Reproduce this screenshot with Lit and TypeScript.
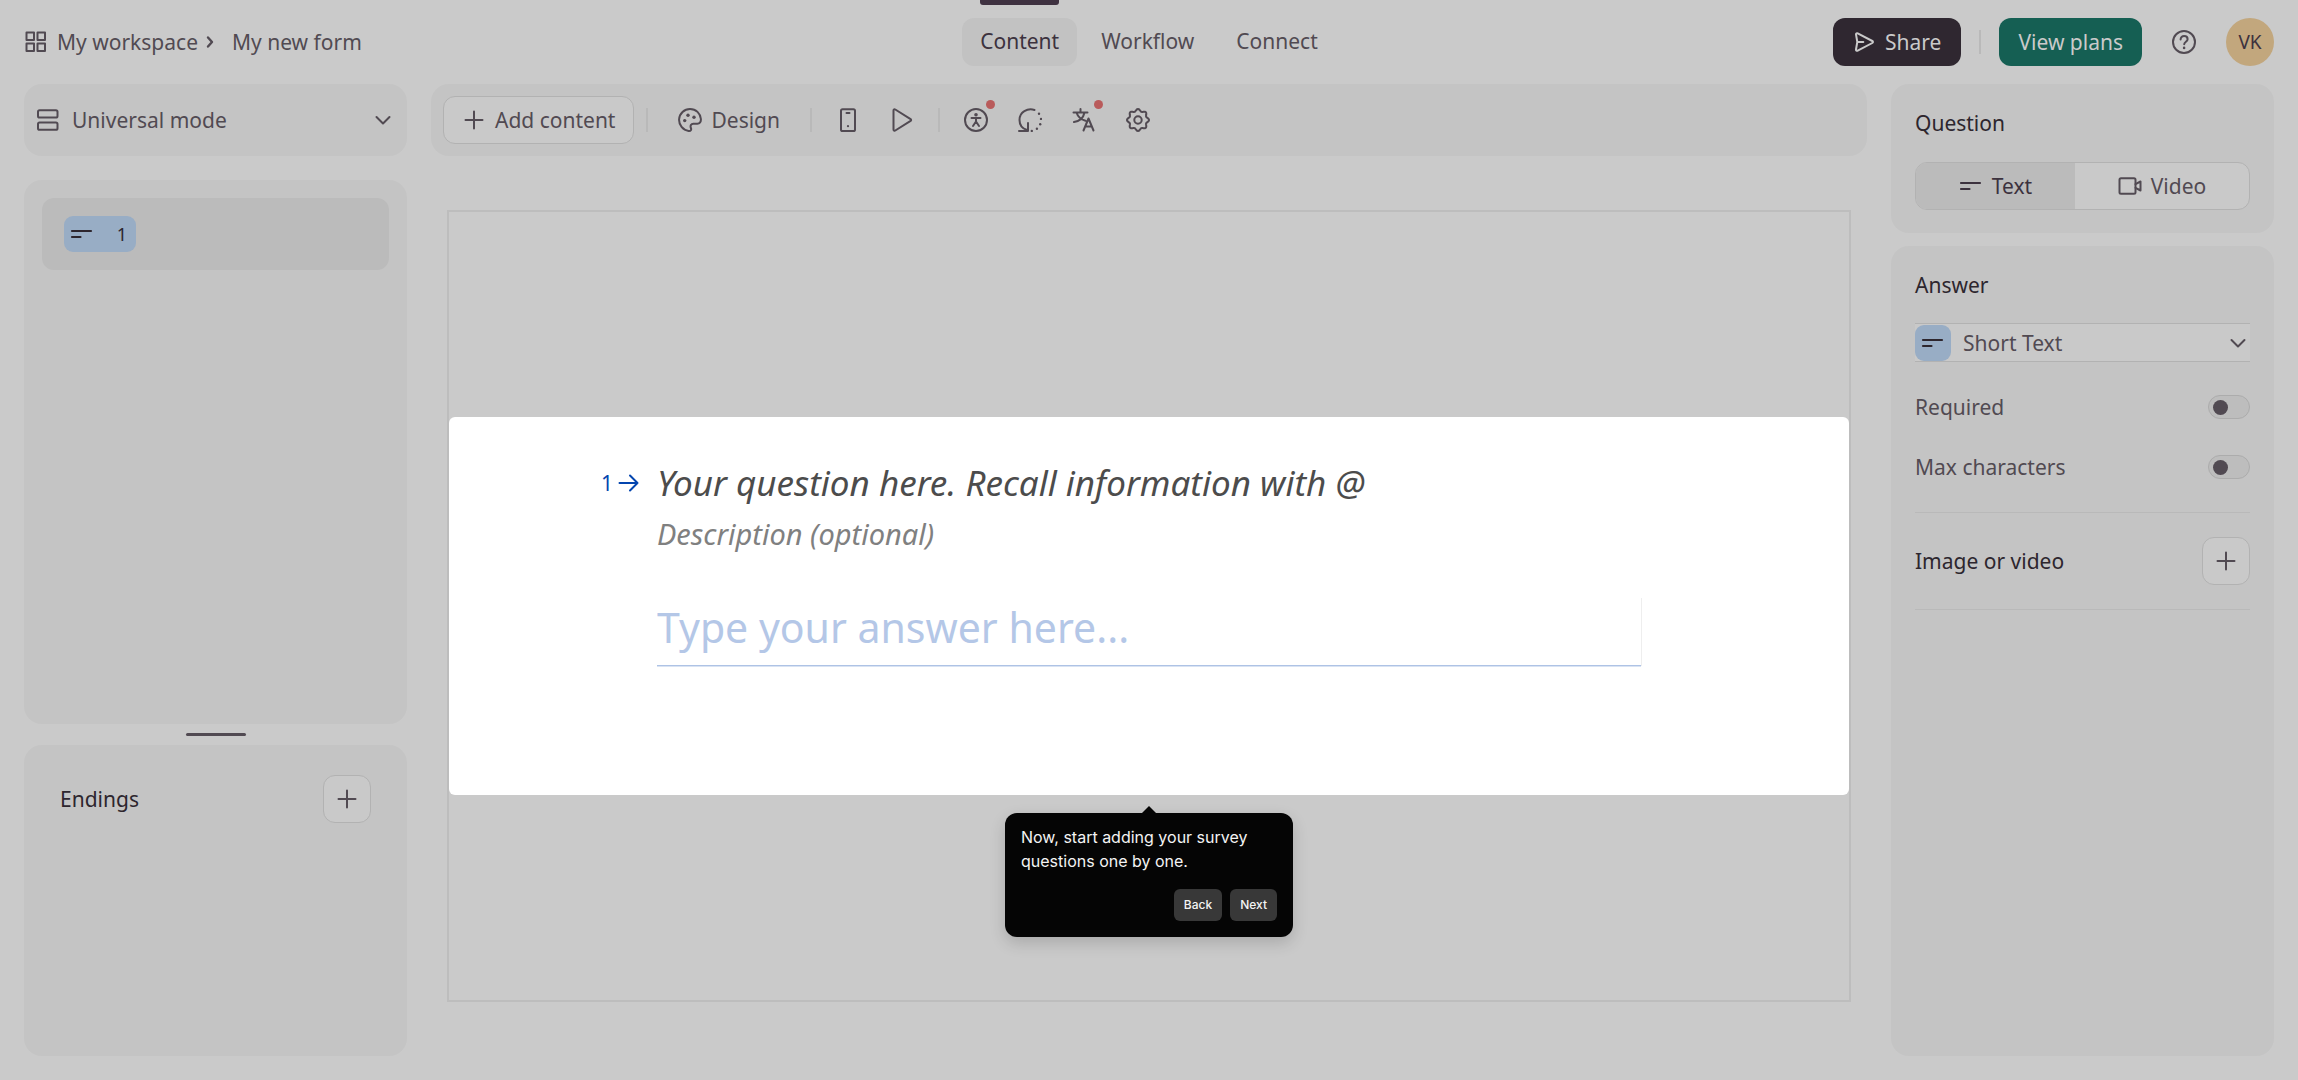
import { LitElement, html, svg, css } from "lit";
import { customElement, state } from "lit/decorators.js";

/** Outline of the settings cog: a circle whose radius swells into eight lobes. */
const cogOutline = (() => {
  const points: string[] = [];
  for (let i = 0; i < 96; i++) {
    const angle = (i / 96) * Math.PI * 2;
    const r = 9.9 + 1.1 * Math.cos(8 * angle);
    points.push(`${(12 + r * Math.cos(angle)).toFixed(2)} ${(12 + r * Math.sin(angle)).toFixed(2)}`);
  }
  return `M${points.join("L")}Z`;
})();

const glyphs = {
  grid: svg`<path d="M2.5 2.5h7.5v7.5h-7.5zM13.5 2.5h7.5v7.5h-7.5zM2.5 13.5h7.5v7.5h-7.5zM13.5 13.5h7.5v7.5h-7.5z" />`,
  crumb: svg`<path d="M10 7.500l4 4.500-4 4.500" stroke-width="2.400" />`,
  rows: svg`<rect x="2" y="2.200" width="19.500" height="7.400" rx="1.600" /><rect x="2" y="14.400" width="19.500" height="7.400" rx="1.600" />`,
  down: svg`<path d="M5.500 9l6.500 6.500L18.500 9" />`,
  plus: svg`<path d="M12 3.500v17M3.500 12h17" />`,
  lines: svg`<path d="M2 9h19M2 15h8.500" stroke-width="2.200" />`,
  send: svg`<path d="M3 4.400c0-1 .9-1.500 1.700-1.100l14.600 7.700c.9.500.9 1.500 0 2l-14.600 7.700c-.9.400-1.800-.3-1.700-1.200L4.300 12zM4.500 12h5.800" />`,
  help: svg`<circle cx="12" cy="12" r="11" /><path d="M8.600 9.400c0-2 1.500-3.400 3.500-3.400s3.500 1.300 3.500 3.200c0 2.500-3.400 2.600-3.400 5.100" /><circle class="solid" cx="12.100" cy="17.900" r="1.300" />`,
  palette: svg`<path d="M22.900 11C22.400 5.300 18 1 12 1a11 11 0 0 0-1.400 21.900c2.300.3 3-1.200 2.300-2.900-.9-2.200.1-4.200 2.400-4.200h4c2.500 0 3.800-2 3.600-4.800z" /><circle class="solid" cx="6.700" cy="12.600" r="1.700" /><circle class="solid" cx="10" cy="7.200" r="1.700" /><circle class="solid" cx="16" cy="9.200" r="1.700" />`,
  phone: svg`<rect x="5" y="1.200" width="14" height="21.800" rx="1.600" /><path d="M10.500 5h3" /><circle class="solid" cx="12" cy="18.200" r="1.100" />`,
  play: svg`<path d="M3.500 2.400c0-1 1-1.500 1.800-.9l15.300 9.600c.7.500.7 1.300 0 1.800l-15.300 9.600c-.8.600-1.800 0-1.800-1z" />`,
  access: svg`<circle cx="12" cy="12" r="11" /><circle class="solid" cx="12" cy="6.700" r="1.800" /><path d="M7.500 10h9M12 10v4M12 13.500l-3 4.500M12 13.500l3 4.500" />`,
  recall: svg`<path d="M16.500 2C9.500-.2 1.500 4 1.500 12c0 4.500 2.700 8.500 7.500 10M1 23h9v-8" /><circle class="solid" cx="21" cy="5.800" r="1.200" /><circle class="solid" cx="23" cy="10.900" r="1.200" /><circle class="solid" cx="22.200" cy="16.200" r="1.200" /><circle class="solid" cx="18.900" cy="20.700" r="1.200" /><circle class="solid" cx="13.800" cy="23" r="1.200" />`,
  translate: svg`<path d="M1.500 4.500h14M8.500 1v3.500M12.500 4.500c-1 4.800-4.500 8.600-10.500 9.500M4.500 4.500c1.200 3.800 4.500 7 9 8.200M11.500 22.500l5-12 5 12M13.500 18.500h6" />`,
  cog: svg`<path d="${cogOutline}" /><circle cx="12" cy="12" r="3.700" />`,
  video: svg`<rect x="1.500" y="4.300" width="16" height="15.400" rx="1.500" /><path d="M17.500 10.200l5-2.700v9l-5-2.700" />`,
  arrow: svg`<path d="M2.500 12h18M13 4.500l7.500 7.500-7.500 7.500" />`,
};

type GlyphName = keyof typeof glyphs;

const icon = (name: GlyphName, extra = "") => html`
  <svg class="icon ${extra}" viewBox="0 0 24 24" aria-hidden="true">${glyphs[name]}</svg>
`;

@customElement("app-root")
export class AppRoot extends LitElement {
  @state() private tab = "Content";
  @state() private medium = "Text";

  static styles = css`
    :host {
      display: block;
      font-family: "Noto Sans", "Open Sans", sans-serif;
      font-size: 21px;
      line-height: 30px;
      color: #514a52;
      --page: #cacaca;
      --panel: #c4c4c4;
      --field: #c9c9c9;
      --pressed: #bbbbbb;
      --rule: #b9b9b9;
      --edge: #b2b2b2;
      --ink: #2d262e;
      --blue: #98adc5;
    }
    * {
      box-sizing: border-box;
    }
    button,
    input,
    select {
      font: inherit;
      color: inherit;
      margin: 0;
      padding: 0;
      border: 0;
      background: none;
      border-radius: 0;
      outline: none;
    }
    button,
    select {
      cursor: pointer;
    }
    a {
      color: inherit;
      text-decoration: none;
    }
    h2 {
      margin: 0;
      font-size: 21px;
      font-weight: 400;
      color: var(--ink);
    }
    .icon {
      width: 24px;
      height: 24px;
      flex: none;
      display: block;
      fill: none;
      stroke: currentColor;
      stroke-width: 2;
      stroke-linecap: round;
      stroke-linejoin: round;
    }
    .solid {
      fill: currentColor;
      stroke: none;
    }
    .app {
      min-height: 100vh;
      display: flex;
      flex-direction: column;
      background: var(--page);
    }

    /* Header */
    .header {
      display: grid;
      grid-template-columns: 1fr auto 1fr;
      align-items: start;
      padding: 0 24px 18px;
    }
    .crumbs,
    .actions {
      display: flex;
      align-items: center;
      height: 48px;
      margin-top: 18px;
    }
    .crumbs a {
      display: flex;
      align-items: center;
      gap: 9px;
    }
    .crumbs .next {
      margin-right: 10px;
    }
    .tabs {
      display: flex;
      gap: 6px;
    }
    .tab {
      display: flex;
      flex-direction: column;
      gap: 13px;
    }
    .tab::before {
      content: "";
      height: 5px;
      margin: 0 18px;
      border-radius: 0 0 3px 3px;
    }
    .tab span {
      padding: 8px 18px 10px;
      border-radius: 12px;
    }
    .tab.active {
      color: #3c323e;
    }
    .tab.active::before {
      background: #3f3241;
    }
    .tab.active span {
      background: #c2c2c2;
    }
    .actions {
      justify-content: flex-end;
      gap: 18px;
    }
    .cta {
      display: flex;
      align-items: center;
      gap: 8px;
      height: 48px;
      padding: 0 20px;
      border-radius: 12px;
      background: #2f2730;
      color: #cacaca;
    }
    .cta.green {
      padding: 0 19px;
      background: #155f53;
    }
    .bar {
      width: 2px;
      height: 24px;
      background: var(--rule);
      flex: none;
    }
    .help {
      width: 48px;
      height: 48px;
      display: grid;
      place-items: center;
    }
    .avatar {
      width: 48px;
      height: 48px;
      border-radius: 50%;
      background: #c2a77d;
      color: #3c323e;
      font-size: 19px;
    }

    /* Workspace */
    .main {
      flex: 1;
      display: grid;
      grid-template-columns: 383px minmax(0, 1fr) 383px;
      gap: 24px;
      padding: 0 24px 24px;
    }
    .column {
      display: flex;
      flex-direction: column;
      min-width: 0;
    }
    .panel {
      background: var(--panel);
      border-radius: 18px;
    }
    .picker {
      display: grid;
      align-items: center;
    }
    .picker > * {
      grid-area: 1 / 1;
    }
    .picker select {
      appearance: none;
      width: 100%;
      height: 100%;
    }
    .picker .lead,
    .picker .tail {
      pointer-events: none;
      z-index: 1;
    }
    .picker .tail {
      justify-self: end;
    }
    .mode {
      height: 72px;
    }
    .mode select {
      padding-left: 48px;
      border-radius: 18px;
    }
    .mode .lead,
    .mode .tail {
      margin: 0 12px;
    }
    .pages {
      flex: 2 1 0;
      margin-top: 24px;
      padding: 18px;
    }
    .page {
      width: 100%;
      height: 72px;
      display: flex;
      align-items: center;
      padding: 0 22px;
      border-radius: 12px;
      background: var(--pressed);
    }
    .badge {
      width: 72px;
      height: 36px;
      display: flex;
      align-items: center;
      justify-content: space-between;
      padding: 0 9px 0 6px;
      border-radius: 9px;
      background: var(--blue);
      color: var(--ink);
      font-size: 18px;
    }
    .grip {
      height: 21px;
      display: grid;
      place-items: center;
      cursor: row-resize;
    }
    .grip::before {
      content: "";
      width: 60px;
      height: 3px;
      border-radius: 2px;
      background: #514a52;
    }
    .endings {
      flex: 1 1 0;
      padding: 30px 36px 27px;
    }
    .line {
      display: flex;
      align-items: center;
      justify-content: space-between;
    }
    .square {
      width: 48px;
      height: 48px;
      display: grid;
      place-items: center;
      border: 1px solid var(--edge);
      border-radius: 12px;
      background: var(--field);
    }

    /* Toolbar */
    .toolbar {
      display: flex;
      align-items: center;
      height: 72px;
      padding: 0 12px;
      gap: 12px;
    }
    .tools {
      display: flex;
      gap: 6px;
    }
    .tool {
      position: relative;
      height: 48px;
      min-width: 48px;
      display: flex;
      align-items: center;
      justify-content: center;
      gap: 9px;
    }
    .tool.wide {
      padding: 0 18px;
    }
    .tool.add {
      border: 1px solid var(--edge);
      border-radius: 12px;
      background: var(--field);
    }
    .dot {
      position: absolute;
      top: 4px;
      left: 34px;
      width: 9px;
      height: 9px;
      border-radius: 50%;
      background: #b95b5b;
    }

    /* Canvas */
    .frame {
      flex: 1;
      display: flex;
      align-items: center;
      margin: 54px 16px;
      border: 2px solid #bdbdbd;
    }
    .card {
      position: relative;
      width: 100%;
      display: grid;
      grid-template-columns: 1fr minmax(0, 984px) 1fr;
      padding: 43px 0 129px;
      border-radius: 6px;
      background: #ffffff;
    }
    .number {
      justify-self: end;
      display: flex;
      align-items: center;
      gap: 4px;
      height: 45px;
      margin-right: 16px;
      color: #0445af;
    }
    .fields {
      display: flex;
      flex-direction: column;
      min-width: 0;
    }
    .fields input {
      width: 100%;
    }
    .fields input::placeholder {
      color: inherit;
      opacity: 1;
    }
    .title {
      height: 45px;
      font-size: 35px;
      line-height: 45px;
      font-style: italic;
      color: #4c4c4c;
    }
    .description {
      height: 36px;
      margin-top: 11px;
      font-size: 29px;
      line-height: 36px;
      font-style: italic;
      color: #808080;
    }
    .answer {
      height: 68px;
      margin-top: 46px;
      padding-bottom: 10px;
      font-size: 41px;
      line-height: 57px;
      color: #b4c7e7;
      border-bottom: 1px solid #aec3e5;
      box-shadow: 0 1px 0 #d9e3f3, 1px 0 0 #eeeeee;
    }

    /* Guided tour bubble */
    .tour {
      position: absolute;
      top: calc(100% + 18px);
      left: 50%;
      width: 288px;
      margin-left: -144px;
      padding: 12px 16px 16px;
      border-radius: 12px;
      background: #050505;
      color: #f4f4f4;
      box-shadow: 0 6px 16px rgba(0, 0, 0, 0.16);
      font-family: Inter, sans-serif;
      font-size: 16px;
      line-height: 24px;
    }
    .tour::before {
      content: "";
      position: absolute;
      left: 50%;
      bottom: 100%;
      margin-left: -7px;
      border: solid transparent;
      border-width: 0 7px 7px;
      border-bottom-color: #050505;
    }
    .tour p {
      margin: 0;
    }
    .steps {
      display: flex;
      justify-content: flex-end;
      gap: 8px;
      margin-top: 16px;
    }
    .steps button {
      height: 32px;
      padding: 0 10px;
      border-radius: 6px;
      background: #383838;
      font-size: 12px;
      font-weight: 500;
      line-height: 16px;
    }

    /* Settings */
    .settings {
      gap: 13px;
    }
    .question {
      padding: 24px 24px 23px;
    }
    .segments {
      display: flex;
      height: 48px;
      margin-top: 24px;
      border: 1px solid var(--edge);
      border-radius: 12px;
      background: var(--field);
      overflow: hidden;
    }
    .segments button {
      flex: 1 1 auto;
      display: flex;
      align-items: center;
      justify-content: center;
      gap: 9px;
    }
    .segments .on {
      background: var(--pressed);
      color: #3c323e;
    }
    .details {
      flex: 1;
      padding: 24px;
    }
    .kind {
      height: 39px;
      margin-top: 23px;
      border: solid var(--edge);
      border-width: 1px 0;
      background: var(--field);
    }
    .kind select {
      padding-left: 48px;
    }
    .chip {
      width: 36px;
      height: 36px;
      display: grid;
      place-items: center;
      border-radius: 9px;
      background: var(--blue);
      color: var(--ink);
    }
    .option {
      height: 60px;
    }
    .options {
      padding: 15px 0;
      border-bottom: 1px solid var(--rule);
    }
    .toggle {
      appearance: none;
      width: 42px;
      height: 24px;
      display: flex;
      align-items: center;
      padding: 0 4px;
      border: 1px solid #acacac;
      border-radius: 12px;
      background: #bdbdbd;
      cursor: pointer;
    }
    .toggle::before {
      content: "";
      width: 15px;
      height: 15px;
      border-radius: 50%;
      background: #514a52;
    }
    .toggle:checked {
      justify-content: flex-end;
    }
    .media {
      padding: 24px 0;
      border-bottom: 1px solid var(--rule);
    }
  `;

  private renderHeader() {
    return html`
      <header class="header">
        <nav class="crumbs" aria-label="Breadcrumb">
          <a href="#workspace">${icon("grid")}My workspace</a>
          ${icon("crumb", "next")}
          <a href="#form">My new form</a>
        </nav>
        <nav class="tabs" aria-label="Sections">
          ${["Content", "Workflow", "Connect"].map(
            (name) => html`
              <a
                class="tab ${this.tab === name ? "active" : ""}"
                href="#${name.toLowerCase()}"
                @click=${() => (this.tab = name)}
                ><span>${name}</span></a
              >
            `,
          )}
        </nav>
        <div class="actions">
          <button class="cta" type="button">${icon("send")}Share</button>
          <span class="bar"></span>
          <button class="cta green" type="button">View plans</button>
          <button class="help" type="button" aria-label="Help">${icon("help")}</button>
          <button class="avatar" type="button">VK</button>
        </div>
      </header>
    `;
  }

  private renderPages() {
    return html`
      <aside class="column">
        <div class="panel picker mode">
          <span class="lead">${icon("rows")}</span>
          <select aria-label="Mode">
            <option>Universal mode</option>
          </select>
          <span class="tail">${icon("down")}</span>
        </div>
        <section class="panel pages" aria-label="Pages">
          <button class="page" type="button">
            <span class="badge">${icon("lines")}<span>1</span></span>
          </button>
        </section>
        <div class="grip" role="separator" aria-label="Resize"></div>
        <section class="panel endings">
          <div class="line">
            <h2>Endings</h2>
            <button class="square" type="button" aria-label="Add ending">${icon("plus")}</button>
          </div>
        </section>
      </aside>
    `;
  }

  private renderTool(name: GlyphName, label: string, dot = false) {
    return html`
      <button class="tool" type="button" aria-label=${label}>
        ${icon(name)}${dot ? html`<span class="dot"></span>` : ""}
      </button>
    `;
  }

  private renderCanvas() {
    return html`
      <main class="column">
        <div class="panel toolbar" role="toolbar" aria-label="Form tools">
          <button class="tool wide add" type="button">${icon("plus")}Add content</button>
          <span class="bar"></span>
          <button class="tool wide" type="button">${icon("palette")}Design</button>
          <span class="bar"></span>
          <div class="tools">
            ${this.renderTool("phone", "Mobile preview")} ${this.renderTool("play", "Preview")}
          </div>
          <span class="bar"></span>
          <div class="tools">
            ${this.renderTool("access", "Accessibility", true)} ${this.renderTool("recall", "Recall")}
            ${this.renderTool("translate", "Translate", true)} ${this.renderTool("cog", "Settings")}
          </div>
        </div>
        <div class="frame">
          <section class="card">
            <div class="number">1${icon("arrow")}</div>
            <div class="fields">
              <input
                class="title"
                type="text"
                aria-label="Question"
                placeholder="Your question here. Recall information with @"
              />
              <input
                class="description"
                type="text"
                aria-label="Description"
                placeholder="Description (optional)"
              />
              <input
                class="answer"
                type="text"
                aria-label="Answer"
                placeholder="Type your answer here..."
              />
            </div>
            <div class="tour" role="dialog" aria-label="Tour">
              <p>Now, start adding your survey questions one by one.</p>
              <div class="steps">
                <button type="button">Back</button>
                <button type="button">Next</button>
              </div>
            </div>
          </section>
        </div>
      </main>
    `;
  }

  private renderSegment(name: string, glyph: GlyphName) {
    const on = this.medium === name;
    return html`
      <button
        class=${on ? "on" : ""}
        type="button"
        aria-pressed=${on ? "true" : "false"}
        @click=${() => (this.medium = name)}
      >
        ${icon(glyph)}${name}
      </button>
    `;
  }

  private renderSettings() {
    return html`
      <aside class="column settings">
        <section class="panel question">
          <h2>Question</h2>
          <div class="segments">
            ${this.renderSegment("Text", "lines")} ${this.renderSegment("Video", "video")}
          </div>
        </section>
        <section class="panel details">
          <h2>Answer</h2>
          <div class="picker kind">
            <span class="lead chip">${icon("lines")}</span>
            <select aria-label="Answer type">
              <option>Short Text</option>
            </select>
            <span class="tail">${icon("down")}</span>
          </div>
          <div class="options">
            <div class="line option">
              <label for="required">Required</label>
              <input class="toggle" id="required" type="checkbox" role="switch" />
            </div>
            <div class="line option">
              <label for="max">Max characters</label>
              <input class="toggle" id="max" type="checkbox" role="switch" />
            </div>
          </div>
          <div class="line media">
            <h2>Image or video</h2>
            <button class="square" type="button" aria-label="Add image or video">
              ${icon("plus")}
            </button>
          </div>
        </section>
      </aside>
    `;
  }

  render() {
    return html`
      <div class="app">
        ${this.renderHeader()}
        <div class="main">${this.renderPages()} ${this.renderCanvas()} ${this.renderSettings()}</div>
      </div>
    `;
  }
}
